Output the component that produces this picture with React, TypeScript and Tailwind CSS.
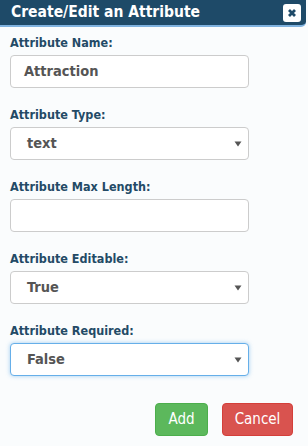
import React from "react";

const Label = ({ children }: { children: React.ReactNode }) => (
  <div className="text-[12.5px] font-bold text-[#234a66] leading-[18px] mb-[3px]">{children}</div>
);

const Caret = () => (
  <svg width="8" height="6" viewBox="0 0 8 6" className="absolute right-[6px] top-1/2 -translate-y-1/2">
    <path d="M0.5 0.5 L7.5 0.5 L4 5.5 Z" fill="#555" />
  </svg>
);

const Select = ({ value, focus }: { value: string; focus?: boolean }) => (
  <div
    className={`relative h-[33px] w-[239px] rounded-[4px] bg-white flex items-center pl-[16px] text-[14.5px] font-bold text-[#555] ${
      focus ? "border border-[#66afe9] shadow-[0_0_4px_rgba(102,175,233,0.6)]" : "border border-[#ccc]"
    }`}
  >
    {value}
    <Caret />
  </div>
);

const Input = ({ value }: { value?: string }) => (
  <div className="h-[33px] w-[239px] rounded-[4px] bg-white border border-[#ccc] flex items-center pl-[13px] text-[14.5px] font-bold text-[#555]">
    {value}
  </div>
);

export default function App() {
  return (
    <div
      className="w-[308px] h-[446px] bg-[#fafcfd] overflow-hidden"
      style={{ fontFamily: '"DejaVu Sans Condensed", "DejaVu Sans", sans-serif' }}
    >
      <div className="h-[27px] w-[306px] bg-[#1e4a68] rounded-br-[5px] border-b-2 border-[#7fb2df] flex items-center justify-between pl-[11px] pr-[5px]">
        <span className="text-white font-bold text-[15.5px]">Create/Edit an Attribute</span>
        <div className="w-[18px] h-[18px] bg-white rounded-[3px] flex items-center justify-center">
          <svg width="10" height="10" viewBox="0 0 10 10">
            <path d="M2 2 L8 8 M8 2 L2 8" stroke="#1e4a68" strokeWidth="2.8" strokeLinecap="butt" />
          </svg>
        </div>
      </div>
      <div className="pl-[10px] pt-[7px] flex flex-col">
        <div className="flex flex-col mb-[18px]">
          <Label>Attribute Name:</Label>
          <Input value="Attraction" />
        </div>
        <div className="flex flex-col mb-[18px]">
          <Label>Attribute Type:</Label>
          <Select value="text" />
        </div>
        <div className="flex flex-col mb-[18px]">
          <Label>Attribute Max Length:</Label>
          <Input />
        </div>
        <div className="flex flex-col mb-[18px]">
          <Label>Attribute Editable:</Label>
          <Select value="True" />
        </div>
        <div className="flex flex-col">
          <Label>Attribute Required:</Label>
          <Select value="False" focus />
        </div>
      </div>
      <div className="flex justify-end gap-[14px] pr-[15px] pt-[27px]">
        <div className="h-[33px] w-[53px] rounded-[4px] bg-[#5cb85c] border border-[#4cae4c] text-white text-[15px] flex items-center justify-center">
          Add
        </div>
        <div className="h-[33px] w-[71px] rounded-[4px] bg-[#d9534f] border border-[#d43f3a] text-white text-[15px] flex items-center justify-center">
          Cancel
        </div>
      </div>
    </div>
  );
}
